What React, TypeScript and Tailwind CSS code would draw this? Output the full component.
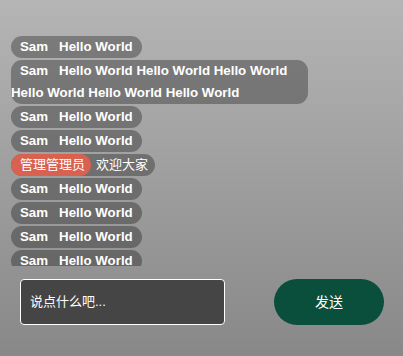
import React from "react";

interface Message {
  name: string;
  text: string;
  admin?: boolean;
}

const messages: Message[] = [
  { name: "Sam", text: "Hello World" },
  { name: "Sam", text: "Hello World Hello World Hello World Hello World Hello World Hello World" },
  { name: "Sam", text: "Hello World" },
  { name: "Sam", text: "Hello World" },
  { name: "管理管理员", text: "欢迎大家", admin: true },
  { name: "Sam", text: "Hello World" },
  { name: "Sam", text: "Hello World" },
  { name: "Sam", text: "Hello World" },
  { name: "Sam", text: "Hello World" },
  { name: "Sam", text: "Hello World" },
];

const Bubble = ({ msg }: { msg: Message }) => {
  return (
    <div className="max-w-[297px] rounded-[11px] bg-black/30 text-[13.3px] leading-[22px] text-white">
      <span
        className={
          msg.admin
            ? "inline-block rounded-full bg-[#d8614f] pl-[9px] pr-[6px] text-[13px] font-normal"
            : "pl-[9px] pr-[6px] font-bold"
        }
      >
        {msg.name}
      </span>
      <span
        className={
          msg.admin ? "ml-[5px] pr-[7px] text-[13px] font-normal" : "ml-[5px] pr-[9px] font-bold"
        }
      >
        {msg.text}
      </span>
    </div>
  );
};

const App = () => {
  return (
    <div
      className="flex h-[356px] w-[403px] flex-col bg-linear-to-b from-[#b5b5b5] to-[#888888]"
      style={{ fontFamily: '"Liberation Sans", "Noto Sans CJK SC", sans-serif' }}
    >
      <div className="flex h-[266px] flex-col items-start gap-[2px] overflow-hidden px-[11px] pt-[36px]">
        {messages.map((m, i) => (
          <Bubble key={i} msg={m} />
        ))}
      </div>
      <div className="mt-[13px] flex items-center justify-between pl-[20px] pr-[19px]">
        <div className="flex h-[46px] w-[205px] items-center rounded-[4px] border border-white bg-[#454545] px-[9px] text-[13px] text-white">
          说点什么吧...
        </div>
        <button className="h-[46px] w-[110px] rounded-full bg-[#0a4f3b] text-[14px] text-white">
          发送
        </button>
      </div>
    </div>
  );
};

export default App;
